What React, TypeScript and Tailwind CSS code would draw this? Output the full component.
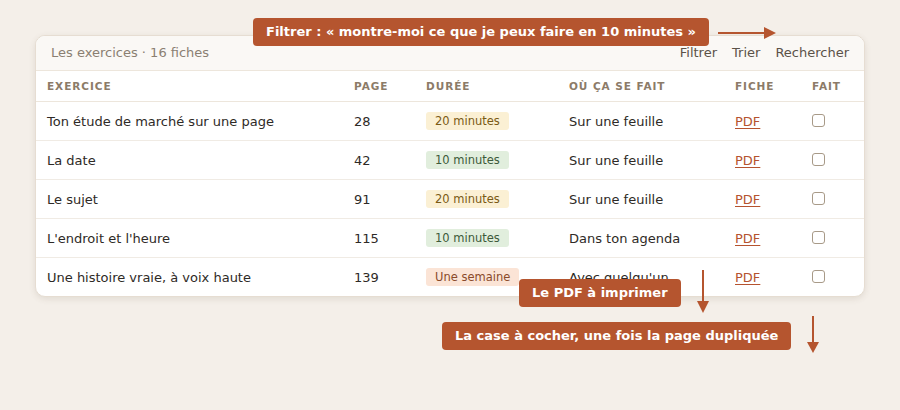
import React from "react";

const rows = [
  { name: "Ton étude de marché sur une page", page: "28", dur: "20 minutes", kind: "y", where: "Sur une feuille" },
  { name: "La date", page: "42", dur: "10 minutes", kind: "g", where: "Sur une feuille" },
  { name: "Le sujet", page: "91", dur: "20 minutes", kind: "y", where: "Sur une feuille" },
  { name: "L'endroit et l'heure", page: "115", dur: "10 minutes", kind: "g", where: "Dans ton agenda" },
  { name: "Une histoire vraie, à voix haute", page: "139", dur: "Une semaine", kind: "o", where: "Avec quelqu'un" },
];

const badgeCls: Record<string, string> = {
  y: "bg-[#fbf0d4] text-[#7a5a14]",
  g: "bg-[#e1eedd] text-[#3d5a3a]",
  o: "bg-[#fbe4d6] text-[#8a4a2a]",
};

export default function App() {
  return (
    <div className="relative w-[900px] h-[410px] bg-[#f4efe9] overflow-hidden" style={{ fontFamily: '"DejaVu Sans", sans-serif' }}>
      <div className="pt-[35px] pl-[35px]">
        <div className="w-[830px] rounded-[10px] border border-[#e6ddd2] bg-white shadow-[0_2px_6px_rgba(90,70,50,0.12)] overflow-hidden">
          <div className="h-[35px] flex items-center justify-between pl-[15px] pr-[15px] bg-[#faf8f5] border-b border-[#ede6dc]">
            <span className="text-[13px] text-[#8a7f72]">Les exercices · 16 fiches</span>
            <div className="flex gap-[15px] text-[13px] text-[#5b5248]">
              <span>Filtrer</span>
              <span>Trier</span>
              <span>Rechercher</span>
            </div>
          </div>
          <table className="w-full border-collapse table-fixed">
            <colgroup>
              <col className="w-[307px]" />
              <col className="w-[72px]" />
              <col className="w-[143px]" />
              <col className="w-[166px]" />
              <col className="w-[77px]" />
              <col />
            </colgroup>
            <thead>
              <tr className="h-[30px] border-b border-[#ede6dc]">
                {["EXERCICE", "PAGE", "DURÉE", "OÙ ÇA SE FAIT", "FICHE", "FAIT"].map((h) => (
                  <th key={h} className="text-left pl-[11px] pt-[2px] text-[10.5px] font-bold tracking-[0.09em] text-[#8c7b68]">
                    {h}
                  </th>
                ))}
              </tr>
            </thead>
            <tbody>
              {rows.map((r, i) => (
                <tr key={i} className={`h-[39px] ${i < rows.length - 1 ? "border-b border-[#f0ebe4]" : ""}`}>
                  <td className="pl-[11px] pt-[2px] text-[13px] text-[#2e2a26]">{r.name}</td>
                  <td className="pl-[11px] pt-[2px] text-[13px] text-[#2e2a26]">{r.page}</td>
                  <td className="pl-[11px]">
                    <span className={`inline-block align-middle h-[18px] leading-[18px] px-[9px] rounded-[3px] text-[11.5px] ${badgeCls[r.kind]}`}>
                      {r.dur}
                    </span>
                  </td>
                  <td className="pl-[11px] pt-[2px] text-[13px] text-[#2e2a26]">{r.where}</td>
                  <td className="pl-[11px] pt-[2px] text-[13px]">
                    <span className="text-[#b5532f] underline underline-offset-2">PDF</span>
                  </td>
                  <td className="pl-[11px] align-top pt-[12px]">
                    <div className="w-[13px] h-[13px] rounded-[3px] border border-[#a89a88] bg-white" />
                  </td>
                </tr>
              ))}
            </tbody>
          </table>
        </div>
      </div>

      {/* Annotations */}
      <div className="absolute left-[253px] top-[18px] h-[28px] px-[13px] rounded-[4px] bg-[#b5552f] text-white text-[13px] font-bold flex items-center">
        Filtrer : « montre-moi ce que je peux faire en 10 minutes »
      </div>
      <svg className="absolute left-[716px] top-[26px]" width="62" height="14" viewBox="0 0 62 14">
        <line x1="2" y1="7" x2="48" y2="7" stroke="#b5552f" strokeWidth="2" />
        <polygon points="48,1 60,7 48,13" fill="#b5552f" />
      </svg>

      <div className="absolute left-[519px] top-[279px] h-[28px] px-[13px] rounded-[4px] bg-[#b5552f] text-white text-[13px] font-bold flex items-center">
        Le PDF à imprimer
      </div>
      <svg className="absolute left-[696px] top-[269px]" width="14" height="46" viewBox="0 0 14 46">
        <line x1="7" y1="1" x2="7" y2="32" stroke="#b5552f" strokeWidth="2" />
        <polygon points="1,32 7,44 13,32" fill="#b5552f" />
      </svg>

      <div className="absolute left-[442px] top-[322px] h-[28px] px-[13px] rounded-[4px] bg-[#b5552f] text-white text-[13px] font-bold flex items-center">
        La case à cocher, une fois la page dupliquée
      </div>
      <svg className="absolute left-[806px] top-[315px]" width="14" height="40" viewBox="0 0 14 40">
        <line x1="7" y1="1" x2="7" y2="27" stroke="#b5552f" strokeWidth="2" />
        <polygon points="1,27 7,38 13,27" fill="#b5552f" />
      </svg>
    </div>
  );
}
